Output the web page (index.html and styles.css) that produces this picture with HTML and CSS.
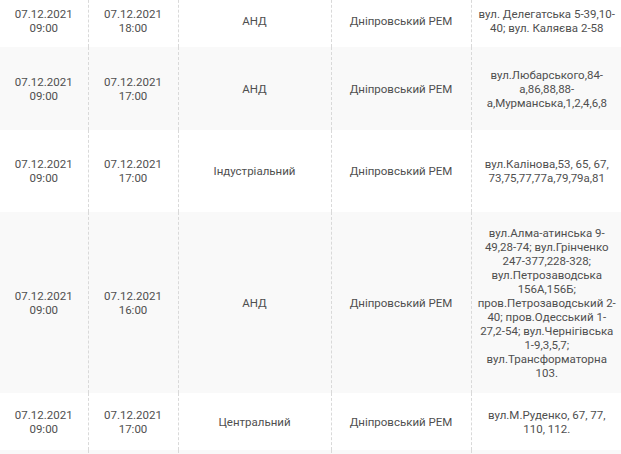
FILE: index.html
```html
<!DOCTYPE html>
<html lang="uk">
<head>
<meta charset="utf-8">
<link rel="stylesheet" href="styles.css">
</head>
<body>
<table class="grid">
  <colgroup>
    <col class="c1"><col class="c2"><col class="c3"><col class="c4"><col class="c5">
  </colgroup>
  <tbody>
    <tr class="row white h52">
      <td>07.12.2021<br>09:00</td>
      <td>07.12.2021<br>18:00</td>
      <td>АНД</td>
      <td>Дніпровський РЕМ</td>
      <td>вул. Делегатська 5-39,10-<br>40; вул. Каляєва 2-58</td>
    </tr>
    <tr class="row gray h83">
      <td>07.12.2021<br>09:00</td>
      <td>07.12.2021<br>17:00</td>
      <td>АНД</td>
      <td>Дніпровський РЕМ</td>
      <td>вул.Любарського,84-<br>а,86,88,88-<br>а,Мурманська,1,2,4,6,8</td>
    </tr>
    <tr class="row white h82">
      <td>07.12.2021<br>09:00</td>
      <td>07.12.2021<br>17:00</td>
      <td>Індустріальний</td>
      <td>Дніпровський РЕМ</td>
      <td>вул.Калінова,53, 65, 67,<br>73,75,77,77а,79,79а,81</td>
    </tr>
    <tr class="row gray h181">
      <td>07.12.2021<br>09:00</td>
      <td>07.12.2021<br>16:00</td>
      <td>АНД</td>
      <td>Дніпровський РЕМ</td>
      <td>вул.Алма-атинська 9-<br>49,28-74; вул.Грінченко<br>247-377,228-328;<br>вул.Петрозаводська<br>156А,156Б;<br>пров.Петрозаводський 2-<br>40; пров.Одесський 1-<br>27,2-54; вул.Чернігівська<br>1-9,3,5,7;<br>вул.Трансформаторна<br>103.</td>
    </tr>
    <tr class="row white h57">
      <td>07.12.2021<br>09:00</td>
      <td>07.12.2021<br>17:00</td>
      <td>Центральний</td>
      <td>Дніпровський РЕМ</td>
      <td>вул.М.Руденко, 67, 77,<br>110, 112.</td>
    </tr>
    <tr class="row gray h20">
      <td></td><td></td><td></td><td></td><td></td>
    </tr>
  </tbody>
</table>
</body>
</html>
```

FILE: styles.css
```css
html, body {
  margin: 0;
  padding: 0;
  background: #ffffff;
}

body {
  font-family: Roboto, "Noto Sans", Arial, sans-serif;
  font-size: 11.5px;
  line-height: 14px;
  color: #4f4f4f;
  overflow: hidden;
}

.grid {
  border-collapse: collapse;
  table-layout: fixed;
  width: 622px;
  margin-top: -5px;
}

.c1 { width: 88px; }
.c2 { width: 90px; }
.c3 { width: 153px; }
.c4 { width: 140px; }
.c5 { width: 151px; }

.grid td {
  text-align: center;
  vertical-align: middle;
  padding: 0 4px;
  border-right: 1px dashed #d9d9d9;
}

.grid td:last-child {
  border-right: none;
}

.gray { background: #f9f9f9; }
.white { background: #ffffff; }

.h20 { height: 20px; }
.h52 { height: 52px; }
.h57 { height: 57px; }
.h83 { height: 83px; }
.h82 { height: 82px; }
.h181 { height: 181px; }
```
